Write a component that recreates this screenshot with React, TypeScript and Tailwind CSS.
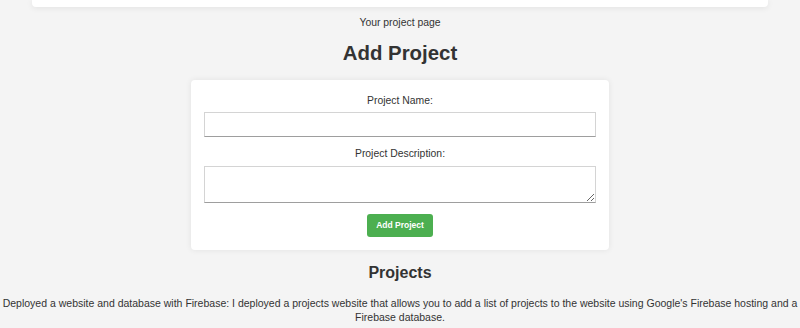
import React from "react";

export default function App() {
  return (
    <div className="min-h-[328px] w-[800px] bg-[#f4f4f4] text-[#333] overflow-hidden" style={{ fontFamily: '"Liberation Sans", Arial, sans-serif' }}>
      <div className="mx-[32px] h-[7px] rounded-b-[4px] bg-white shadow-[0_1px_6px_rgba(0,0,0,0.08)]" />
      <p className="mt-[9px] text-center text-[10.4px] leading-[13px]">Your project page</p>
      <h2 className="mt-[12px] text-center text-[20.4px] font-bold leading-[24px]">Add Project</h2>
      <div className="mx-auto mt-[15px] flex w-[418px] flex-col items-center rounded-[4px] bg-white px-[13px] pt-[14px] pb-[13px] shadow-[0_0_6px_rgba(0,0,0,0.08)]">
        <label className="text-[10.4px] leading-[13px]">Project Name:</label>
        <input className="mt-[5px] h-[25px] w-full border border-[#d4d4d4] border-b-[#9e9e9e] bg-white" />
        <label className="mt-[10px] text-[10.4px] leading-[13px]">Project Description:</label>
        <textarea className="mt-[6px] h-[37px] w-full border border-[#d4d4d4] border-b-[#9e9e9e] bg-white" />
        <button className="mt-[11px] h-[23px] w-[66px] rounded-[3px] bg-[#4caf50] text-[8.5px] font-bold text-white">Add Project</button>
      </div>
      <h3 className="mt-[14px] text-center text-[16px] font-bold leading-[18px]">Projects</h3>
      <p className="mt-[14px] px-[1px] text-center text-[10.5px] leading-[14px]">
        Deployed a website and database with Firebase: I deployed a projects website that allows you to add a list of projects to the website using Google's Firebase hosting and a Firebase database.
      </p>
    </div>
  );
}
